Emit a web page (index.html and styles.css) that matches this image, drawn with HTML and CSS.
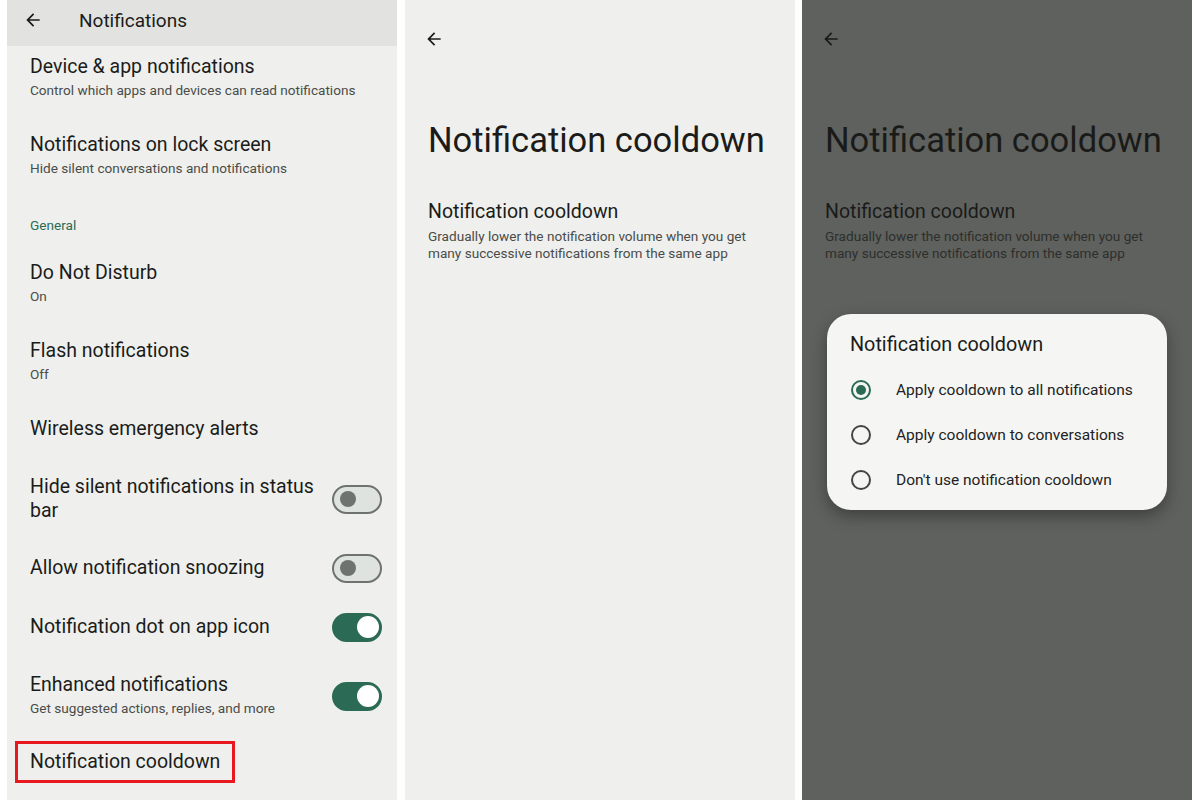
FILE: index.html
```html
<!DOCTYPE html>
<html lang="en">
<head>
  <meta charset="UTF-8">
  <title>Notification cooldown</title>
  <link rel="stylesheet" href="styles.css">
</head>
<body>
  <div class="screens">

    <!-- screen 1: notification settings list -->
    <div class="phone">
      <div class="topbar">
        <svg class="back" viewBox="0 0 24 24"><path d="M20 11H7.83l5.59-5.59L12 4l-8 8 8 8 1.41-1.41L7.83 13H20v-2z"/></svg>
        <span class="topbar-title">Notifications</span>
      </div>

      <div class="row first">
        <div class="row-text">
          <div class="title">Device &amp; app notifications</div>
          <div class="sub">Control which apps and devices can read notifications</div>
        </div>
      </div>
      <div class="row">
        <div class="row-text">
          <div class="title">Notifications on lock screen</div>
          <div class="sub">Hide silent conversations and notifications</div>
        </div>
      </div>
      <div class="section">General</div>
      <div class="row">
        <div class="row-text">
          <div class="title">Do Not Disturb</div>
          <div class="sub">On</div>
        </div>
      </div>
      <div class="row">
        <div class="row-text">
          <div class="title">Flash notifications</div>
          <div class="sub">Off</div>
        </div>
      </div>
      <div class="row">
        <div class="row-text">
          <div class="title">Wireless emergency alerts</div>
        </div>
      </div>
      <div class="row hide-row">
        <div class="row-text">
          <div class="title">Hide silent notifications in status bar</div>
        </div>
        <span class="toggle"></span>
      </div>
      <div class="row snooze-row">
        <div class="row-text">
          <div class="title">Allow notification snoozing</div>
        </div>
        <span class="toggle"></span>
      </div>
      <div class="row dot-row">
        <div class="row-text">
          <div class="title">Notification dot on app icon</div>
        </div>
        <span class="toggle on"></span>
      </div>
      <div class="row enhanced-row">
        <div class="row-text">
          <div class="title">Enhanced notifications</div>
          <div class="sub">Get suggested actions, replies, and more</div>
        </div>
        <span class="toggle on"></span>
      </div>
      <div class="row last">
        <div class="marked">Notification cooldown</div>
      </div>
    </div>

    <!-- screen 2: cooldown page -->
    <div class="phone">
      <div class="page-head">
        <svg class="back" viewBox="0 0 24 24"><path d="M20 11H7.83l5.59-5.59L12 4l-8 8 8 8 1.41-1.41L7.83 13H20v-2z"/></svg>
      </div>
      <h1 class="big-title">Notification cooldown</h1>
      <div class="item">
        <div class="title">Notification cooldown</div>
        <div class="sub two-line">Gradually lower the notification volume when you get many successive notifications from the same app</div>
      </div>
    </div>

    <!-- screen 3: cooldown page with dialog -->
    <div class="phone dim">
      <div class="page-head">
        <svg class="back" viewBox="0 0 24 24"><path d="M20 11H7.83l5.59-5.59L12 4l-8 8 8 8 1.41-1.41L7.83 13H20v-2z"/></svg>
      </div>
      <h1 class="big-title">Notification cooldown</h1>
      <div class="item">
        <div class="title">Notification cooldown</div>
        <div class="sub two-line">Gradually lower the notification volume when you get many successive notifications from the same app</div>
      </div>

      <div class="dialog">
        <div class="dialog-title">Notification cooldown</div>
        <div class="option"><span class="radio checked"></span>Apply cooldown to all notifications</div>
        <div class="option"><span class="radio"></span>Apply cooldown to conversations</div>
        <div class="option"><span class="radio"></span>Don't use notification cooldown</div>
      </div>
    </div>

  </div>
</body>
</html>
```

FILE: styles.css
```css
body { margin: 0; background: #fff; font-family: Roboto, "Noto Sans", sans-serif; color: #1b1c1a; }
.screens { display: flex; gap: 8px; padding-left: 7px; height: 800px; overflow: hidden; }
.phone { position: relative; width: 390px; height: 800px; background: #eff0ed; flex: none; overflow: hidden; }
.phone.dim { width: 390px; background: #5f615e; color: #1a1b19; margin-left: -1px; }

.back { width: 20px; height: 20px; fill: #1b1c1a; display: block; }

.topbar { height: 46px; background: #e2e3e0; display: flex; align-items: center; padding-left: 16px; }
.topbar .back { margin-top: -6px; }
.topbar-title { font-size: 19px; margin-left: 36px; margin-top: -5px; }

.row { display: flex; align-items: center; padding: 17px 15px 15px 23px; }
.row.first { padding-top: 9px; }
.row-text { flex: 1; }
.title { font-size: 19.5px; line-height: 24px; }
.sub { font-size: 13.6px; line-height: 22px; color: #4a4c49; }
.section { font-size: 13.6px; line-height: 18px; color: #2a6b55; padding: 22px 23px 10px; }

.hide-row { padding-top: 19px; }
.hide-row .row-text { margin-right: 6px; }
.snooze-row { padding-top: 18px; padding-bottom: 18px; }
.enhanced-row { padding-top: 19px; }
.row.last { padding: 7px 15px 0 8px; }

.toggle { width: 46px; height: 25px; border: 2px solid #6f7370; border-radius: 16px; background: #dfe3df; position: relative; margin: -3px 0; flex: none; }
.toggle::after { content: ""; position: absolute; left: 6px; top: 4.5px; width: 16px; height: 16px; border-radius: 50%; background: #6f7370; }
.toggle.on { background: #2b6a55; border-color: #2b6a55; }
.toggle.on::after { left: 23px; top: 1.5px; width: 22px; height: 22px; background: #fff; }

.marked { border: 3px solid #e8181f; padding: 7px 12px; font-size: 19.5px; line-height: 22px; }

.page-head { padding: 29px 0 0 19px; height: 51px; }
.big-title { font-size: 34.5px; font-weight: 400; line-height: 40px; margin: 40px 0 0; padding-left: 23px; }
.item { padding: 40px 23px 0; }
.item .title { font-size: 19.5px; line-height: 24px; }
.sub.two-line { line-height: 17px; margin-top: 4px; }

.dim .back { fill: #1a1b19; }
.dim .sub { color: #2d2f2c; }

.dialog { position: absolute; left: 25px; top: 314px; width: 340px; height: 196px; box-sizing: border-box; background: #f5f6f3; border-radius: 24px; padding: 19px 24px 0; box-shadow: 0 6px 16px rgba(0,0,0,0.35); color: #1b1c1a; }
.dialog-title { font-size: 19.8px; line-height: 24px; margin-left: -1px; margin-bottom: 10px; }
.option { display: flex; align-items: center; height: 45px; font-size: 15.5px; color: #222; }
.radio { width: 16px; height: 16px; border: 2px solid #444; border-radius: 50%; margin-right: 25px; position: relative; flex: none; }
.radio.checked { border-color: #2b6a55; }
.radio.checked::after { content: ""; position: absolute; left: 3px; top: 3px; width: 10px; height: 10px; border-radius: 50%; background: #2b6a55; }
```
